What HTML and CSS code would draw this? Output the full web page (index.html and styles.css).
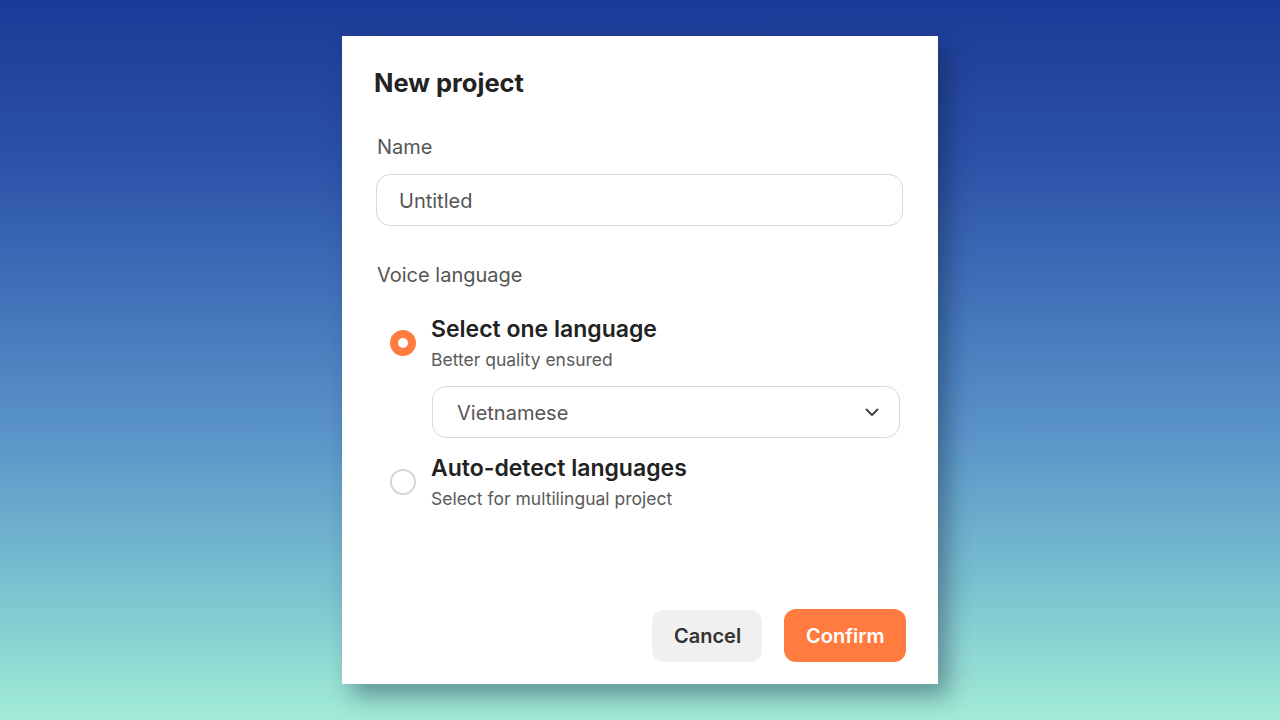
FILE: index.html
```html
<!DOCTYPE html>
<html lang="en">
<head>
<meta charset="utf-8">
<title>New project</title>
<link rel="stylesheet" href="styles.css">
</head>
<body>
<div class="stage">
  <div class="modal">
    <h1 class="title">New project</h1>
    <label class="label label-name">Name</label>
    <div class="input">Untitled</div>
    <div class="label label-voice">Voice language</div>

    <div class="option option-first">
      <span class="radio radio-on"></span>
      <div class="option-body">
        <div class="option-title">Select one language</div>
        <div class="option-sub">Better quality ensured</div>
        <div class="select">
          <span>Vietnamese</span>
          <svg class="chev" width="14" height="9" viewBox="0 0 14 9"><path d="M1.5 1.5 L7 7 L12.5 1.5" fill="none" stroke="#444" stroke-width="2" stroke-linecap="round" stroke-linejoin="round"/></svg>
        </div>
      </div>
    </div>

    <div class="option option-second">
      <span class="radio"></span>
      <div class="option-body">
        <div class="option-title">Auto-detect languages</div>
        <div class="option-sub">Select for multilingual project</div>
      </div>
    </div>

    <div class="footer">
      <button class="btn btn-cancel">Cancel</button>
      <button class="btn btn-confirm">Confirm</button>
    </div>
  </div>
</div>
</body>
</html>
```

FILE: styles.css
```css
* { box-sizing: border-box; }
html, body { margin: 0; padding: 0; }
body {
  width: 1280px;
  height: 720px;
  overflow: hidden;
  font-family: Inter, "Noto Sans", "Liberation Sans", sans-serif;
  background: linear-gradient(180deg, #1c3a97 0%, #2c51a8 22%, #4679bd 45%, #5a93c9 60%, #78bed0 80%, #a2ecd6 100%);
}
.stage {
  width: 1280px;
  height: 720px;
  padding: 36px 0 0 342px;
}
.modal {
  width: 596px;
  height: 648px;
  background: #fff;
  padding: 31px 35px 22px 34px;
  display: flex;
  flex-direction: column;
  box-shadow: 10px 12px 22px rgba(10, 25, 50, 0.38);
}
.title {
  margin: 0 0 0 -2px;
  font-size: 25.5px;
  line-height: 32px;
  font-weight: 700;
  color: #222;
}
.label {
  display: block;
  margin-left: 1px;
  font-size: 20px;
  line-height: 24px;
  color: #555;
}
.label-name { margin-top: 36px; }
.input {
  margin-top: 15px;
  height: 52px;
  border: 1px solid #d8d8d8;
  border-radius: 14px;
  padding: 2px 20px 0 22px;
  display: flex;
  align-items: center;
  font-size: 20px;
  color: #555;
}
.label-voice { margin-top: 37px; }
.option {
  display: flex;
  align-items: flex-start;
  padding-left: 14px;
}
.option-first { margin-top: 28px; }
.option-second { margin-top: 16px; }
.radio {
  flex: none;
  width: 26px;
  height: 26px;
  border-radius: 50%;
  border: 2px solid #d6d6d6;
  margin-top: 15px;
  margin-right: 15px;
}
.radio-on {
  border: 8px solid #ff7b3f;
  background: #fff;
}
.option-body {
  flex: 1;
  min-width: 0;
}
.option-title {
  font-size: 23px;
  line-height: 28px;
  font-weight: 600;
  color: #222;
}
.option-sub {
  margin-top: 5px;
  font-size: 17.5px;
  line-height: 24px;
  color: #5a5a5a;
}
.select {
  margin: 14px 3px 0 1px;
  height: 52px;
  border: 1px solid #d8d8d8;
  border-radius: 14px;
  padding: 1px 20px 0 24px;
  display: flex;
  align-items: center;
  justify-content: space-between;
  font-size: 20px;
  color: #555;
}
.chev { display: block; }
.footer {
  margin-top: auto;
  display: flex;
  justify-content: flex-end;
  gap: 22px;
}
.btn {
  height: 53px;
  border: none;
  border-radius: 12px;
  padding: 0 22px;
  font-family: Inter, "Noto Sans", "Liberation Sans", sans-serif;
  font-size: 20px;
  font-weight: 600;
}
.btn-cancel {
  background: #f0f0f0;
  color: #333;
  width: 110px;
  height: 52px;
  margin-top: 1px;
}
.btn-confirm {
  background: #ff7b3f;
  color: #fff;
  width: 122px;
  margin-right: -3px;
}
```
